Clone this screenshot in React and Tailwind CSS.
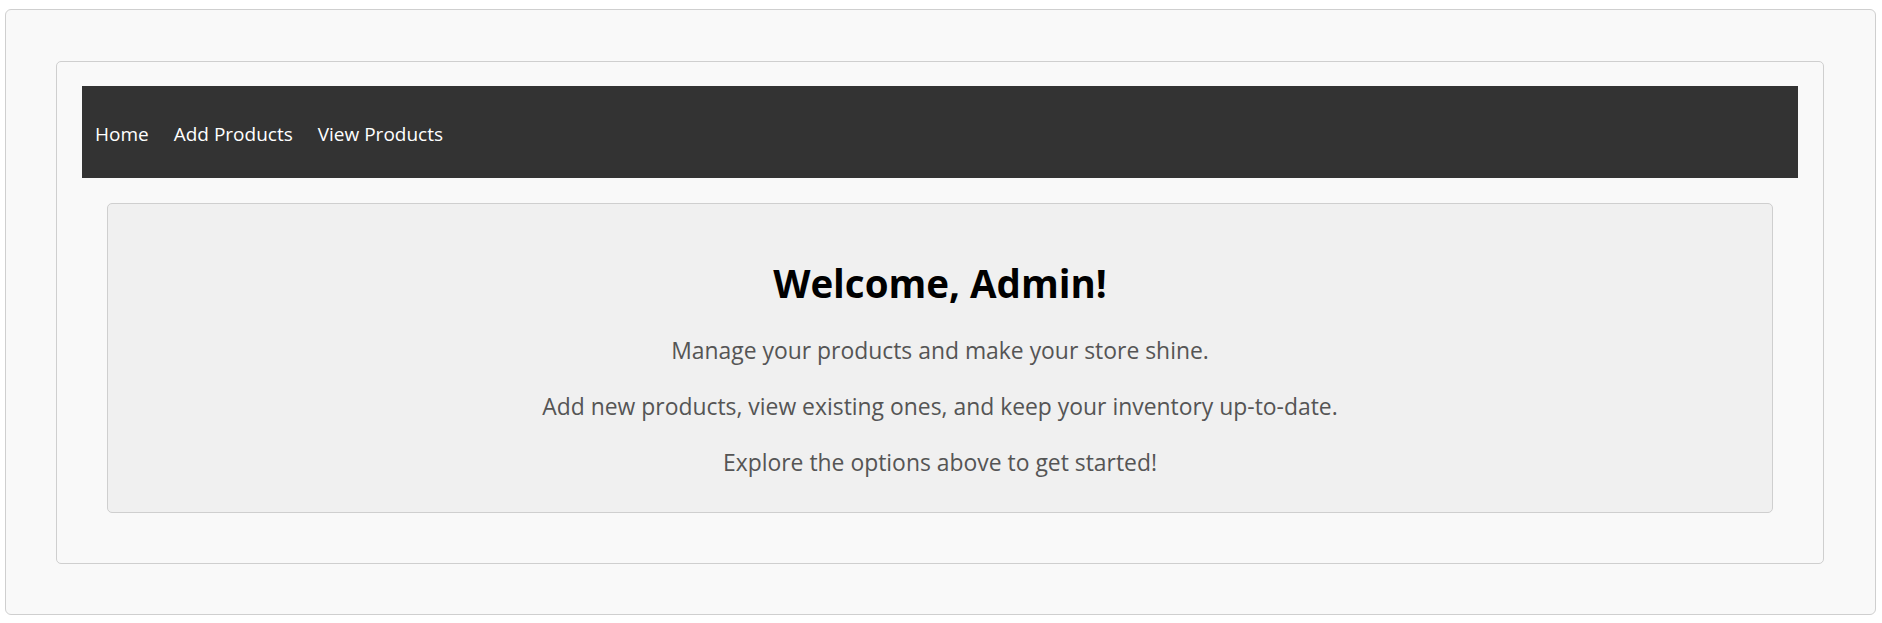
import React from 'react';

const links = ['Home', 'Add Products', 'View Products'];

const App = () => {
  return (
    <div className="min-h-screen bg-white pl-[5px] pr-[6px] pt-[9px] pb-[8px] font-['Open_Sans',sans-serif]">
      {/* Page frame */}
      <div className="h-[606px] rounded-[6px] border border-[#cfcfcf] bg-[#f9f9f9] pl-[50px] pr-[51px] pt-[51px] pb-[50px]">
        {/* Dashboard panel */}
        <div className="rounded-[5px] border border-[#cfcfcf] bg-[#f9f9f9] pl-[25px] pr-[25px] pt-[24px] pb-[25px]">
          <nav className="flex h-[92px] items-center gap-[25px] bg-[#333333] pl-[13px] pt-[4px]">
            {links.map((label) => (
              <a key={label} href="#" className="text-[19px] leading-none text-white">
                {label}
              </a>
            ))}
          </nav>

          <section className="mx-[25px] mt-[25px] mb-[25px] rounded-[5px] border border-[#cfcfcf] bg-[#f0f0f0] pt-[53px] pb-[33px] text-center">
            <h1 className="text-[38.5px] leading-[53px] font-bold text-black">Welcome, Admin!</h1>
            <p className="mt-[25px] text-[22.9px] leading-[32px] text-[#555555]">
              Manage your products and make your store shine.
            </p>
            <p className="mt-[24px] text-[22.9px] leading-[32px] text-[#555555]">
              Add new products, view existing ones, and keep your inventory up-to-date.
            </p>
            <p className="mt-[24px] text-[22.9px] leading-[32px] text-[#555555]">
              Explore the options above to get started!
            </p>
          </section>
        </div>
      </div>
    </div>
  );
};

export default App;
